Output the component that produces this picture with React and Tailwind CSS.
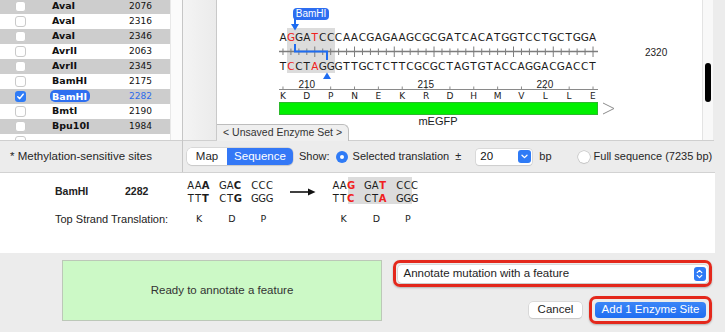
import React from 'react';

const CELL = 7.95;
const TOP = 'AGGATCCCAACGAGAAGCGCGATCACATGGTCCTGCTGGA';
const BOTTOM = 'TCCTAGGGTTGCTCTTCGCGCTAGTGTACCAGGACGACCT';
const AMINO = ['K', 'D', 'P', 'N', 'E', 'K', 'R', 'D', 'H', 'M', 'V', 'L', 'L', 'E'];

const enzymes = [
  { name: 'AvaI', pos: '2076' },
  { name: 'AvaI', pos: '2316' },
  { name: 'AvaI', pos: '2346' },
  { name: 'AvrII', pos: '2063' },
  { name: 'AvrII', pos: '2345' },
  { name: 'BamHI', pos: '2175' },
  { name: 'BamHI', pos: '2282', selected: true },
  { name: 'BmtI', pos: '2190' },
  { name: 'Bpu10I', pos: '1984' },
  { name: '', pos: '' },
];

const Check = () => (
  <svg width="9" height="9" viewBox="0 0 9 9">
    <path d="M1.8 4.8 L3.7 6.6 L7.2 2.2" stroke="#fff" strokeWidth="1.5" fill="none" strokeLinecap="round" strokeLinejoin="round" />
  </svg>
);

const Strand = ({ seq, reds }) => (
  <div className="relative flex h-[13px] leading-[13px] text-[10.5px] text-[#1c1c1c] font-['DejaVu_Sans',sans-serif]">
    {seq.split('').map((c, i) => (
      <span key={i} className={reds.includes(i) ? 'w-[7.95px] text-center text-[#f02020]' : 'w-[7.95px] text-center'}>
        {c}
      </span>
    ))}
  </div>
);

const SequenceDrawing = () => {
  const ticks = [];
  for (let i = 0; i < 40; i++) {
    const x = 62 + (i + 0.5) * CELL;
    const big = i % 5 === 4;
    ticks.push(<line key={'r' + i} x1={x} x2={x} y1={big ? 46.5 : 48.5} y2={big ? 57 : 55} stroke="#7d7d7d" strokeWidth="1" />);
    if (i % 3 === 0) {
      ticks.push(<line key={'a' + i} x1={x} x2={x} y1={86.5} y2={89.5} stroke="#8a8a8a" strokeWidth="1" />);
    }
  }
  return (
    <svg className="absolute left-0 top-0" width="485" height="125">
      <rect x="70" y="28" width="48" height="45" fill="#dcdcdc" />
      <line x1="62" x2="381" y1="51.5" y2="51.5" stroke="#7d7d7d" strokeWidth="1.5" />
      {ticks}
      <path d="M78 44 V51.5 H110 V60" stroke="#1f6cf0" strokeWidth="2" fill="none" />
      <line x1="78" x2="78" y1="19" y2="25" stroke="#1f6cf0" strokeWidth="2" />
      <path d="M74 24 L82 24 L78 30.5 Z" fill="#1f6cf0" />
      <path d="M106 79 L114 79 L110 72.5 Z" fill="#1f6cf0" />
      <line x1="62" x2="381" y1="89.5" y2="89.5" stroke="#8a8a8a" strokeWidth="1" />
      <rect x="62.5" y="102.5" width="318" height="12" fill="#00f000" stroke="#2cb82c" strokeWidth="1" />
      <polyline points="386,103 397,108.5 386,114" fill="none" stroke="#8c8c8c" strokeWidth="1" />
    </svg>
  );
};

const Numbers = () => (
  <div className="relative flex h-[10px] leading-[10px] mt-[7px] text-[10px] text-[#222] font-['Liberation_Sans',sans-serif]">
    {TOP.split('').map((_, i) => (
      <span key={i} className="w-[7.95px] flex justify-center whitespace-nowrap">
        {i === 3 ? '210' : i === 18 ? '215' : i === 33 ? '220' : ''}
      </span>
    ))}
  </div>
);

const Aminos = () => (
  <div className="relative flex h-[10px] leading-[10px] mt-[1px] text-[9px] text-[#222] font-['DejaVu_Sans',sans-serif]">
    {AMINO.map((a, i) => (
      <span key={i} className="w-[23.85px] flex">
        <span className="w-[7.95px] text-center">{a}</span>
      </span>
    ))}
  </div>
);

const Codon = ({ letters }) => (
  <span className="flex">
    {letters.map((l, i) => (
      <span
        key={i}
        className={
          l.red
            ? 'w-[7.4px] text-center font-bold text-[#f02020]'
            : l.bold
            ? 'w-[7.4px] text-center font-bold'
            : 'w-[7.4px] text-center'
        }
      >
        {l.c}
      </span>
    ))}
  </span>
);

const c = (s, bold = [], red = []) => s.split('').map((ch, i) => ({ c: ch, bold: bold.includes(i), red: red.includes(i) }));

const CodonRow = ({ codons }) => (
  <div className="flex gap-[9.8px] h-[13px] leading-[13px]">
    {codons.map((cd, i) => (
      <Codon key={i} letters={cd} />
    ))}
  </div>
);

export default function App() {
  return (
    <div className="w-[725px] h-[332px] bg-[#ececec] overflow-hidden font-['Liberation_Sans',sans-serif] text-[#222]">
      {/* top: enzyme list + sequence view */}
      <div className="flex h-[172px] w-[714px]">
        <div className="w-[183px] shrink-0 flex flex-col border-r border-[#c6c6c6]">
          <div className="h-[141px] flex bg-white border-b border-[#cfcfcf]">
            <div className="w-[170px] overflow-hidden">
              <div className="-mt-[1px]">
                {enzymes.map((e, i) => (
                  <div key={i} className={i % 2 === 0 ? 'h-[15px] flex items-center bg-[#cdcdcd]' : 'h-[15px] flex items-center bg-white'}>
                    <div
                      className={
                        e.selected
                          ? 'ml-[15px] w-[11px] h-[11px] rounded-[3px] bg-[#2f7bf6] flex items-center justify-center'
                          : 'ml-[15px] w-[11px] h-[11px] rounded-[3px] bg-white border border-[#cacaca]'
                      }
                    >
                      {e.selected && <Check />}
                    </div>
                    <div className="ml-[26px] w-[77px] font-['DejaVu_Sans',sans-serif] font-bold text-[9.5px] text-[#111]">
                      {e.selected ? (
                        <span className="-ml-[2px] px-[2px] pr-[3px] py-[0.5px] rounded-[5px] bg-[#2e6ff0] text-white">{e.name}</span>
                      ) : (
                        e.name
                      )}
                    </div>
                    <div className={e.selected ? "font-['DejaVu_Sans',sans-serif] text-[9px] text-[#2d6bea]" : "font-['DejaVu_Sans',sans-serif] text-[9px] text-[#111]"}>
                      {e.pos}
                    </div>
                  </div>
                ))}
              </div>
            </div>
            <div className="w-[12px] bg-[#fbfbfb] border-l border-[#e8e8e8]" />
          </div>
          <div className="flex-1 flex items-center pl-[10px] text-[11.5px] text-[#262626] whitespace-nowrap">* Methylation-sensitive sites</div>
        </div>

        <div className="flex-1 flex flex-col min-w-0">
          <div className="h-[141px] flex border-b border-[#cfcfcf]">
            <div className="w-[33px] bg-gradient-to-r from-[#f4f4f4] to-[#ebebeb]" />
            <div className="w-[486px] bg-white border-l border-[#c9c9c9] flex flex-col">
              <div className="relative h-[124px]">
                <SequenceDrawing />
                <div className="absolute left-[76px] top-[8px] h-[12px] w-[36px] rounded-[4px] bg-[#2d6df0] text-white text-[10px] leading-[12px] text-center">
                  BamHI
                </div>
                <div className="pl-[62px] pt-[31px] flex flex-col">
                  <Strand seq={TOP} reds={[1, 4]} />
                  <div className="h-[16px] flex items-center">
                    <div className="w-[366px]" />
                    <span className="relative text-[10px] text-[#222]">2320</span>
                  </div>
                  <Strand seq={BOTTOM} reds={[1, 4]} />
                  <Numbers />
                  <Aminos />
                  <div className="h-[14px]" />
                  <div className="relative w-[318px] text-center text-[11px] leading-[13px] text-[#222]">mEGFP</div>
                </div>
              </div>
              <div className="mt-auto flex">
                <div className="h-[17px] px-[6px] flex items-center bg-[#efefef] border-t border-r border-[#bdbdbd] rounded-tr-[6px] text-[10.5px] text-[#333]">
                  &lt; Unsaved Enzyme Set &gt;
                </div>
              </div>
            </div>
            <div className="w-[11px] bg-[#f8f8f8] border-l border-[#e3e3e3] pt-[63px] pl-[2px]">
              <div className="w-[6px] h-[39px] rounded-full bg-black" />
            </div>
          </div>

          {/* toolbar */}
          <div className="flex-1 flex items-center pl-[4px] text-[11px] text-[#262626] whitespace-nowrap">
            <div className="shrink-0 flex h-[17px] rounded-[5px] overflow-hidden shadow-[0_0_0_0.5px_#c4c4c4,0_1px_1px_rgba(0,0,0,0.12)] text-[11.5px]">
              <div className="w-[40px] bg-white flex items-center justify-center">Map</div>
              <div className="w-[66px] bg-[#3478f6] text-white flex items-center justify-center">Sequence</div>
            </div>
            <span className="ml-[6px] shrink-0">Show:</span>
            <div className="shrink-0 ml-[6px] w-[12px] h-[12px] rounded-full bg-[#2f7bf6] flex items-center justify-center">
              <div className="w-[4px] h-[4px] rounded-full bg-white" />
            </div>
            <span className="ml-[5px] shrink-0">Selected translation&nbsp; ±</span>
            <div className="shrink-0 ml-[15px] w-[56px] h-[16px] bg-white rounded-[3px] shadow-[0_0_0_0.5px_#c8c8c8,0_1px_1px_rgba(0,0,0,0.1)] flex items-center pl-[4px]">
              <span className="text-[11.5px] text-[#111]">20</span>
              <div className="ml-auto mr-[1px] w-[13px] h-[13px] rounded-[3px] bg-[#2f7bf6] flex items-center justify-center">
                <svg width="7" height="5" viewBox="0 0 7 5">
                  <path d="M1 1.2 L3.5 3.6 L6 1.2" stroke="#fff" strokeWidth="1.3" fill="none" strokeLinecap="round" strokeLinejoin="round" />
                </svg>
              </div>
            </div>
            <span className="ml-[7px] shrink-0">bp</span>
            <div className="shrink-0 ml-[26px] w-[12px] h-[12px] rounded-full bg-white shadow-[0_0_0_0.5px_#b5b5b5,0_1px_1px_rgba(0,0,0,0.1)]" />
            <span className="ml-[4px] shrink-0">Full sequence (7235 bp)</span>
          </div>
        </div>
      </div>

      {/* mutation detail */}
      <div className="h-[81px] w-[715px] bg-white border-t border-[#d2d2d2] pl-[55px] pt-[6px]">
        <div className="flex items-center">
          <span className="w-[70px] font-bold text-[10.5px] text-[#222]">BamHI</span>
          <span className="w-[62px] font-bold text-[10.5px] text-[#222]">2282</span>
          <div className="flex flex-col font-['DejaVu_Sans',sans-serif] text-[10px] text-[#1c1c1c]">
            <CodonRow codons={[c('AAA', [2]), c('GAC', [2]), c('CCC')]} />
            <CodonRow codons={[c('TTT', [2]), c('CTG', [2]), c('GGG')]} />
          </div>
          <svg className="ml-[17px]" width="26" height="8" viewBox="0 0 26 8">
            <line x1="0" x2="20" y1="4" y2="4" stroke="#111" strokeWidth="1.6" />
            <path d="M18 0.5 L25.5 4 L18 7.5 Z" fill="#111" />
          </svg>
          <div className="relative ml-[16px] flex flex-col font-['DejaVu_Sans',sans-serif] text-[10px] text-[#1c1c1c]">
            <div className="absolute left-[15.5px] top-[-2px] w-[64px] h-[27px] bg-[#dcdcdc]" />
            <div className="relative">
              <CodonRow codons={[c('AAG', [], [2]), c('GAT', [], [2]), c('CCC')]} />
            </div>
            <div className="relative">
              <CodonRow codons={[c('TTC', [], [2]), c('CTA', [], [2]), c('GGG')]} />
            </div>
          </div>
        </div>
        <div className="flex items-center mt-[6px] text-[11px] text-[#222]">
          <span className="w-[132px]">Top Strand Translation:</span>
          <div className="flex font-['DejaVu_Sans',sans-serif] text-[9.5px]">
            {['K', 'D', 'P'].map((a, i) => (
              <span key={i} className="w-[32.2px] pl-[9px]">{a}</span>
            ))}
          </div>
          <div className="ml-[48px] flex font-['DejaVu_Sans',sans-serif] text-[9.5px]">
            {['K', 'D', 'P'].map((a, i) => (
              <span key={i} className="w-[32.2px] pl-[9px]">{a}</span>
            ))}
          </div>
        </div>
      </div>

      {/* bottom actions */}
      <div className="flex pl-[62px] pt-[7px] w-[715px]">
        <div className="w-[320px] h-[61px] bg-[#ccf9c6] border border-[#bcc8b8] flex items-center justify-center text-[11.5px] text-[#333]">
          Ready to annotate a feature
        </div>
        <div className="ml-[11px] flex flex-col w-[320px]">
          <div className="h-[27px] w-[319px] rounded-[7px] border-[3px] border-[#e4281c] p-[1.5px] shadow-[0_1px_2px_rgba(0,0,0,0.25)]">
            <div className="h-[18px] rounded-[4px] bg-white shadow-[0_0_0_0.5px_#c8c8c8,0_1px_1px_rgba(0,0,0,0.12)] flex items-center pl-[6px] pr-[2px] text-[11.5px] text-[#1e1e1e]">
              Annotate mutation with a feature
              <div className="ml-auto w-[12px] h-[14px] rounded-[3px] bg-[#2f7bf6] flex items-center justify-center">
                <svg width="7" height="10" viewBox="0 0 7 10">
                  <path d="M1.2 3.6 L3.5 1.4 L5.8 3.6 M1.2 6.4 L3.5 8.6 L5.8 6.4" stroke="#fff" strokeWidth="1.2" fill="none" strokeLinecap="round" strokeLinejoin="round" />
                </svg>
              </div>
            </div>
          </div>
          <div className="mt-[9px] flex items-center justify-end pr-[1px]">
            <div className="w-[53px] h-[16px] rounded-[4px] bg-white shadow-[0_0_0_0.5px_#c8c8c8,0_1px_1px_rgba(0,0,0,0.15)] flex items-center justify-center text-[11.5px] text-[#1e1e1e]">
              Cancel
            </div>
            <div className="ml-[7px] w-[123px] h-[28px] rounded-[7px] border-[3px] border-[#e4281c] p-[3px] shadow-[0_1px_2px_rgba(0,0,0,0.25)]">
              <div className="h-[16px] rounded-[4px] bg-gradient-to-b from-[#3b85f7] to-[#1f6ef2] text-white text-[11.5px] flex items-center justify-center">
                Add 1 Enzyme Site
              </div>
            </div>
          </div>
        </div>
      </div>
    </div>
  );
}
